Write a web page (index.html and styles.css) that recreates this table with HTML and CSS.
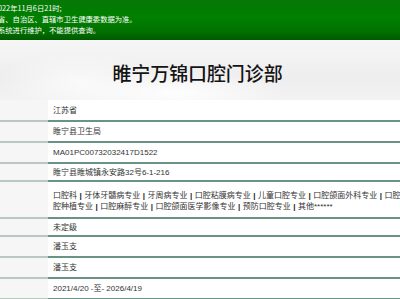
FILE: index.html
```html
<!DOCTYPE html>
<html lang="zh-CN">
<head>
<meta charset="utf-8">
<title>睢宁万锦口腔门诊部</title>
<link rel="stylesheet" href="styles.css">
</head>
<body>
<div class="page">
  <header class="notice">
    <p class="notice-line">022年11月6日21时;</p>
    <p class="notice-line">省、自治区、直辖市卫生健康委数据为准。</p>
    <p class="notice-line">系统进行维护，不能提供查询。</p>
  </header>
  <section class="hero">
    <h1 class="title">睢宁万锦口腔门诊部</h1>
  </section>
  <div class="info">
    <div class="row first"><div class="label"></div><div class="value">江苏省</div></div>
    <div class="row"><div class="label"></div><div class="value">睢宁县卫生局</div></div>
    <div class="row"><div class="label"></div><div class="value">MA01PC00732032417D1522</div></div>
    <div class="row short"><div class="label"></div><div class="value">睢宁县睢城镇永安路32号6-1-216</div></div>
    <div class="row multi"><div class="label"></div><div class="value">口腔科<span class="sep">|</span>牙体牙髓病专业<span class="sep">|</span>牙周病专业<span class="sep">|</span>口腔粘膜病专业<span class="sep">|</span>儿童口腔专业<span class="sep">|</span>口腔颌面外科专业<span class="sep">|</span>口腔修复专业<span class="sep">|</span>口<br>腔种植专业<span class="sep">|</span>口腔麻醉专业<span class="sep">|</span>口腔颌面医学影像专业<span class="sep">|</span>预防口腔专业<span class="sep">|</span>其他******</div></div>
    <div class="row short"><div class="label"></div><div class="value">未定级</div></div>
    <div class="row"><div class="label"></div><div class="value">潘玉支</div></div>
    <div class="row"><div class="label"></div><div class="value">潘玉支</div></div>
    <div class="row"><div class="label"></div><div class="value">2021/4/20 -至- 2026/4/19</div></div>
  </div>
</div>
</body>
</html>
```

FILE: styles.css
```css
html, body {
  margin: 0;
  padding: 0;
  background: #ffffff;
}
body {
  width: 400px;
  height: 299px;
  overflow: hidden;
  font-family: "Liberation Sans", "Noto Sans CJK SC", sans-serif;
}
.page {
  width: 400px;
}
.notice {
  height: 40px;
  box-sizing: border-box;
  padding: 2.5px 0 0 0;
  margin-left: -2px;
  background: linear-gradient(to bottom, #067806 0%, #008000 45%, #007000 80%, #005800 100%);
  color: #ffffff;
}
.notice-line {
  margin: 0;
  font-size: 7.3px;
  line-height: 11px;
  white-space: nowrap;
  font-family: "Noto Sans CJK SC", "Liberation Sans", sans-serif;
}
.hero {
  height: 60px;
  box-sizing: border-box;
  padding-top: 23px;
  background:
    radial-gradient(ellipse 110px 22px at 44% 88%, rgba(255,255,255,0.95), rgba(255,255,255,0) 100%),
    radial-gradient(ellipse 80px 30px at 20% 70%, rgba(255,255,255,0.7), rgba(255,255,255,0) 100%),
    linear-gradient(to bottom, #f6f6f6 0%, #eeeeee 60%, #f2f2f2 100%);
}
.title {
  margin: 0;
  padding-right: 5px;
  text-align: center;
  font-family: "Noto Sans CJK SC", sans-serif;
  font-weight: 500;
  font-size: 19px;
  line-height: 20px;
  color: #141414;
  letter-spacing: -0.1px;
}
.info {
  display: flex;
  flex-direction: column;
}
.row {
  display: grid;
  grid-template-columns: 48px 1fr;
  height: 21px;
}
.row.first {
  height: 22px;
}
.row.short {
  height: 18px;
}
.row.multi {
  height: 37px;
}
.label {
  background: #f6f6f6;
  border-bottom: 2px solid #b9c9c2;
}
.value {
  display: flex;
  align-items: center;
  padding-left: 5px;
  border-bottom: 2px solid #6a9285;
  font-size: 8px;
  line-height: 11px;
  color: #333333;
  white-space: nowrap;
  overflow: hidden;
}
.row.multi .value {
  display: block;
  padding-top: 8px;
  box-sizing: border-box;
}
.sep {
  font-weight: bold;
  padding: 0 2.5px;
  color: #222222;
}
```
